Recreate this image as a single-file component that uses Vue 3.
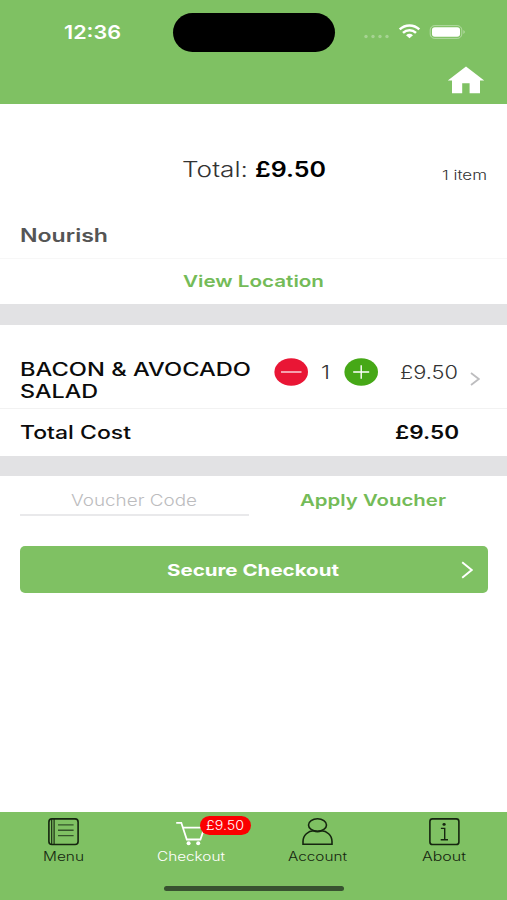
<script setup>
// Stretches a text run horizontally so that it fills the given width.
const vFit = {
  mounted(el, { value }) {
    const natural = el.getBoundingClientRect().width
    el.style.transform = `scaleX(${value / natural})`
    el.style.marginRight = `${value - natural}px`
  },
}

const tabs = [
  { name: 'Menu', width: 41 },
  { name: 'Checkout', width: 68, badge: '£9.50', active: true },
  { name: 'Account', width: 59 },
  { name: 'About', width: 44 },
]
</script>

<template>
  <div class="screen">
    <header class="header">
      <div class="status">
        <div class="clock"><span v-fit="57" class="fit">12:36</span></div>
        <div class="island"></div>
        <svg class="signals" viewBox="0 0 104 20" width="104" height="20">
          <g fill="#fff" opacity=".3">
            <circle cx="3" cy="14.5" r="1.7" /><circle cx="10" cy="14.5" r="1.7" />
            <circle cx="17" cy="14.5" r="1.7" /><circle cx="24" cy="14.5" r="1.7" />
          </g>
          <g fill="none" stroke="#fff" stroke-width="2.5">
            <path d="M36.7 7.4C42.2 2.2 50.8 2.2 56.3 7.4" />
            <path d="M40 10.8C43.8 7.3 49.2 7.3 53 10.8" />
          </g>
          <path fill="#fff" d="M43 13.2Q46.5 10.4 50 13.2L46.5 16.3Z" />
          <rect x="67.2" y="3.6" width="31.6" height="12.8" rx="4.4" fill="none" stroke="#fff" stroke-opacity=".4" />
          <rect x="69" y="5.2" width="28" height="9.6" rx="2.8" fill="#fff" />
          <path d="M100.5 8Q102.9 10 100.5 12Z" fill="#fff" opacity=".5" />
        </svg>
      </div>
      <svg class="home" viewBox="0 0 38 28" width="38" height="28">
        <path fill="#fff" d="M19 .6 37.2 14.4H33V27.3H22.6V17.3H15.2V27.3H5V14.4H.8Z" />
      </svg>
    </header>

    <section class="summary">
      <span class="summary-total">
        <span v-fit="66" class="fit light">Total:</span><b v-fit="71" class="fit">£9.50</b>
      </span>
      <span class="count"><span v-fit="45" class="fit light">1 item</span></span>
    </section>

    <section class="venue"><span v-fit="88" class="fit">Nourish</span></section>
    <section class="location"><span v-fit="141" class="fit">View Location</span></section>

    <section class="item">
      <div class="item-name">
        <div><span v-fit="231" class="fit">BACON &amp; AVOCADO</span></div>
        <div><span v-fit="78" class="fit">SALAD</span></div>
      </div>
      <svg class="round" viewBox="0 0 34 28" width="34" height="28">
        <ellipse cx="17.2" cy="14" rx="16.8" ry="13.8" fill="#e91635" />
        <path d="M7 14H27.5" stroke="#fff" stroke-width="1.2" />
      </svg>
      <span class="qty"><span v-fit="9" class="fit light">1</span></span>
      <svg class="round" viewBox="0 0 34 28" width="34" height="28">
        <ellipse cx="17.2" cy="14" rx="16.8" ry="13.8" fill="#46a817" />
        <path d="M9.2 14H25.2M17.2 7.3V20.7" stroke="#fff" stroke-width="1.4" />
      </svg>
      <span class="price"><span v-fit="58" class="fit light">£9.50</span></span>
      <svg class="chevron" viewBox="0 0 10 14" width="10" height="14">
        <path d="M1 1 8.8 7 1 13" fill="none" stroke="#bdbdbf" stroke-width="1.8" />
      </svg>
    </section>

    <section class="cost">
      <span v-fit="111" class="fit">Total Cost</span>
      <span v-fit="64" class="fit cost-value">£9.50</span>
    </section>

    <section class="voucher">
      <div class="field"><span v-fit="126" class="fit light">Voucher Code</span></div>
      <div class="apply"><span v-fit="146" class="fit">Apply Voucher</span></div>
    </section>

    <div class="checkout">
      <span v-fit="172" class="fit">Secure Checkout</span>
      <svg viewBox="0 0 12 18" width="12" height="18">
        <path d="M1.2 1.2 10.7 9 1.2 16.8" fill="none" stroke="#fff" stroke-width="1.9" />
      </svg>
    </div>

    <nav class="tabs">
      <div v-for="tab in tabs" :key="tab.name" class="tab" :class="{ active: tab.active }">
        <svg class="icon" viewBox="0 0 32 28" width="32" height="28" fill="none" stroke="currentColor" stroke-width="1.6">
          <template v-if="tab.name === 'Menu'">
            <rect x="1.9" y=".9" width="29.2" height="25.6" rx="3" />
            <path d="M4.7 1V26.6M7.1 1V26.6" stroke-width="1.1" />
            <path d="M11 6.9H26.6M11 12.2H26.6M11 17.6H26.6" stroke="#35542b" stroke-width="1.4" />
          </template>
          <template v-else-if="tab.name === 'Checkout'">
            <path d="M2.2 4.8H7.3L12.8 21.5H26.4L30.5 9.6H9.2" stroke-width="1.8" />
            <g fill="currentColor" stroke="none"><circle cx="14.6" cy="25.2" r="2" /><circle cx="24.2" cy="25.2" r="2" /></g>
          </template>
          <template v-else-if="tab.name === 'Account'">
            <ellipse cx="16.5" cy="7" rx="9" ry="6.2" />
            <path d="M2 26.3V23.5C2 17 7.5 12.8 12.5 12.8C15 13.8 18 13.8 20.5 12.8C25.5 12.8 31 17 31 23.5V26.3Z" />
          </template>
          <template v-else>
            <rect x="1.9" y=".9" width="29" height="25.6" rx="2.6" />
            <path d="M12.9 10.4H16.7V21.8M12.7 21.8H20" stroke-width="1.4" />
            <ellipse cx="16.1" cy="6.4" rx="1.6" ry="1.3" fill="currentColor" stroke="none" />
          </template>
        </svg>
        <div class="tab-label"><span v-fit="tab.width" class="fit light">{{ tab.name }}</span></div>
        <div v-if="tab.badge" class="badge"><span v-fit="38" class="fit light">{{ tab.badge }}</span></div>
      </div>
      <div class="home-indicator"></div>
    </nav>
  </div>
</template>

<style>
body {
  background: #fff;
}
</style>

<style scoped>
.screen {
  width: 507px;
  height: 900px;
  display: flex;
  flex-direction: column;
  overflow: hidden;
  background: #fff;
  color: #0b0b0b;
  font-family: Inter, "Liberation Sans", sans-serif;
  line-height: 1;
  white-space: nowrap;
}
.screen * {
  box-sizing: border-box;
}
.fit {
  display: inline-block;
  flex: none;
  transform-origin: 0 50%;
}
.light {
  font-weight: 300;
}
.header {
  height: 104px;
  flex: none;
  background: #7fc163;
  display: flex;
  flex-direction: column;
}
.status {
  display: flex;
  align-items: center;
  height: 38px;
  margin-top: 13px;
  padding-left: 64px;
  color: #fff;
}
.clock {
  width: 109px;
  font-size: 19px;
  font-weight: 600;
}
.island {
  width: 162px;
  height: 39px;
  border-radius: 20px;
  background: #000;
}
.signals {
  margin-left: 28px;
}
.home {
  margin: 15px 22px 0 auto;
}
.summary {
  height: 106px;
  flex: none;
  display: flex;
  align-items: flex-start;
  justify-content: space-between;
  padding: 55px 20px 0 181.5px;
  color: #333;
}
.summary-total {
  display: flex;
  gap: 7px;
  font-size: 21px;
}
.summary-total b {
  color: #000;
  font-weight: 600;
}
.count {
  padding-top: 10px;
  font-size: 13px;
}
.venue {
  height: 49px;
  flex: none;
  padding: 17px 20px 0;
  border-bottom: 1px solid #f7f7f7;
  color: #555;
  font-size: 18px;
  font-weight: 600;
}
.location {
  height: 66px;
  flex: none;
  padding: 14px 0 0 183px;
  border-bottom: 21px solid #e2e2e4;
  color: #74bb58;
  font-size: 16.5px;
  font-weight: 600;
}
.item {
  height: 84px;
  flex: none;
  display: flex;
  align-items: flex-start;
  padding: 33px 0 0 20px;
  border-bottom: 1px solid #f2f2f2;
}
.item-name {
  width: 254px;
  padding-top: 1px;
  font-size: 18px;
  font-weight: 500;
  line-height: 22px;
}
.qty {
  width: 36px;
  padding: 6px 0 0 13px;
  font-size: 18px;
  color: #333;
}
.price {
  width: 92px;
  padding: 6px 0 0 21.5px;
  font-size: 18px;
  color: #333;
}
.chevron {
  margin-top: 14px;
}
.cost {
  height: 67px;
  flex: none;
  display: flex;
  justify-content: space-between;
  padding: 15px 48px 0 20px;
  border-bottom: 20px solid #e2e2e4;
  font-size: 18px;
  font-weight: 500;
}
.cost-value {
  font-weight: 600;
}
.voucher {
  flex: none;
  height: 70px;
  display: grid;
  grid-template-columns: 229px 1fr;
  padding-left: 20px;
  font-size: 16px;
}
.field {
  height: 40px;
  padding: 16px 0 0 51px;
  border-bottom: 2px solid #e9e9eb;
  color: #bcbcbe;
}
.apply {
  padding: 16px 0 0 51px;
  color: #74bb58;
  font-weight: 600;
}
.checkout {
  height: 47px;
  flex: none;
  margin: 0 19px 0 20px;
  padding: 0 15px 0 147px;
  display: flex;
  align-items: center;
  justify-content: space-between;
  border-radius: 5px;
  background: #7fc163;
  color: #fff;
  font-size: 16.5px;
  font-weight: 700;
}
.checkout .fit {
  padding-top: 2px;
}
.tabs {
  height: 88px;
  flex: none;
  margin-top: auto;
  display: grid;
  grid-template-columns: repeat(4, 1fr);
  grid-template-rows: 74px 5px;
  background: #7fc163;
}
.tab {
  position: relative;
  display: flex;
  flex-direction: column;
  align-items: center;
  padding-top: 6px;
  color: #15250f;
}
.active {
  color: #fff;
}
.tab-label {
  margin-top: 4px;
  padding: 1px 0 0 1px;
  font-size: 12.5px;
}
.badge {
  position: absolute;
  left: 73px;
  top: 4px;
  width: 51px;
  height: 19px;
  padding: 3px 0 0 6.5px;
  border-radius: 10px;
  background: #fb0000;
  font-size: 13px;
}
.home-indicator {
  grid-column: 1 / -1;
  justify-self: center;
  width: 180px;
  height: 5px;
  border-radius: 3px;
  background: #385230;
}
</style>
